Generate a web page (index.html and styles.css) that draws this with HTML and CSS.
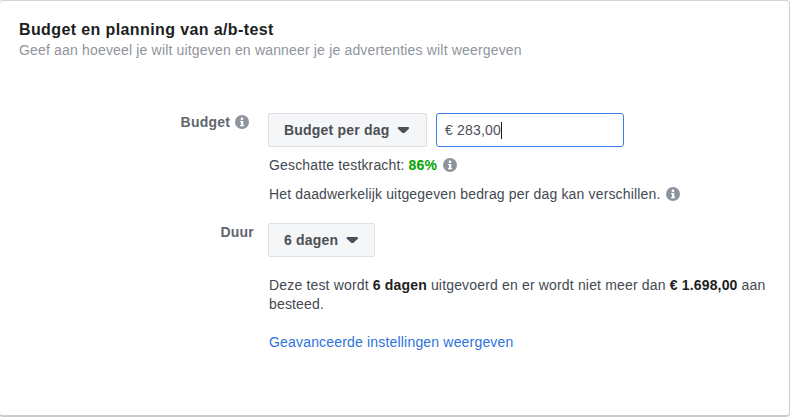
FILE: index.html
```html
<!DOCTYPE html>
<html lang="nl">
<head>
<meta charset="utf-8">
<title>Budget en planning</title>
<link rel="stylesheet" href="styles.css">
</head>
<body>
<svg class="defs" width="0" height="0"><symbol id="info" viewBox="0 0 14 14"><circle cx="7" cy="7" r="7" fill="currentColor"/><rect x="5.9" y="6" width="2.4" height="5.2" fill="#fff"/><rect x="5" y="6" width="1.2" height="1.1" fill="#fff"/><rect x="5" y="10.1" width="4.1" height="1.1" fill="#fff"/><circle cx="7" cy="3.8" r="1.4" fill="#fff"/></symbol></svg>
<section class="card">
  <header class="head">
    <h1 class="title">Budget en planning van a/b-test</h1>
    <p class="sub">Geef aan hoeveel je wilt uitgeven en wanneer je je advertenties wilt weergeven</p>
  </header>
  <div class="form">
    <div class="label with-icon">Budget <svg class="info"><use href="#info"/></svg></div>
    <div class="field">
      <div class="controls">
        <button class="select wide">Budget per dag <span class="caret"></span></button>
        <div class="input"><span>€ 283,00</span><span class="cursor"></span></div>
      </div>
      <p class="line first">Geschatte testkracht: <b class="green">86%</b> <svg class="info"><use href="#info"/></svg></p>
      <p class="line second">Het daadwerkelijk uitgegeven bedrag per dag kan verschillen. <svg class="info"><use href="#info"/></svg></p>
    </div>
    <div class="label">Duur</div>
    <div class="field">
      <div class="controls">
        <button class="select">6 dagen <span class="caret"></span></button>
      </div>
      <p class="para">Deze test wordt <b>6 dagen</b> uitgevoerd en er wordt niet meer dan <b>€ 1.698,00</b> aan besteed.</p>
      <a class="link" href="#">Geavanceerde instellingen weergeven</a>
    </div>
  </div>
</section>
</body>
</html>
```
FILE: styles.css
```css
html, body { margin: 0; padding: 0; background: #fff; }
body { width: 792px; height: 417px; overflow: hidden; font-family: "Liberation Sans", Arial, sans-serif; color: #444950; font-size: 14px; }
.defs { position: absolute; }
.card { box-sizing: border-box; width: 791px; height: 417px; margin-left: -1px; padding: 19px 0 0 19px; background: #fff; border: 1px solid #cdcdcd; border-top-color: #d4d4d4; border-bottom: 2px solid #cdcdcd; border-radius: 4px; }
.title { margin: 0; font-size: 16px; line-height: 20px; font-weight: 700; color: #1c1e21; letter-spacing: 0.39px; }
.sub { margin: 0; font-size: 14px; line-height: 20px; color: #90949c; letter-spacing: 0.17px; }
.form { display: grid; grid-template-columns: 235px 510px; column-gap: 14px; row-gap: 19px; margin-top: 53px; }
.label { display: flex; justify-content: flex-end; align-items: center; gap: 5px; height: 18px; font-size: 14px; font-weight: 700; color: #606770; letter-spacing: 0.2px; white-space: nowrap; }
.with-icon { padding-right: 5px; }
.field { min-width: 0; }
.controls { display: flex; gap: 9px; }
.select { box-sizing: border-box; display: inline-flex; align-items: center; gap: 8px; height: 34px; padding: 0 16px 0 15px; background: #f5f6f7; border: 1px solid #dddfe2; border-radius: 2px; font: 700 14px "Liberation Sans", Arial, sans-serif; color: #4b4f56; letter-spacing: 0.2px; white-space: nowrap; }
.wide { width: 159px; }
.caret { display: inline-block; width: 12px; height: 6px; background: #4b4f56; clip-path: polygon(8% 0, 92% 0, 100% 22%, 58% 100%, 42% 100%, 0 22%); }
.input { box-sizing: border-box; display: flex; align-items: center; width: 188px; height: 34px; padding-left: 8px; border: 1px solid #4080ea; border-radius: 3px; background: #fff; font-size: 14px; color: #4b4f56; letter-spacing: 0.2px; }
.cursor { width: 1px; height: 17px; background: #1c1e21; }
.line { margin: 0; padding-left: 1px; font-size: 14px; line-height: 20px; color: #444950; letter-spacing: 0.155px; white-space: nowrap; }
.first { margin-top: 8px; }
.second { margin-top: 9px; }
.line .info { margin-left: 2px; vertical-align: -2px; }
.green { color: #00a400; }
.info { width: 14px; height: 14px; color: #8d949e; flex: none; }
.para { margin: 19px 0 0; padding-left: 1px; font-size: 14px; line-height: 19px; color: #444950; letter-spacing: 0.165px; }
.para b { color: #1c1e21; }
.link { display: block; margin-top: 18px; padding-left: 1px; font-size: 14px; line-height: 20px; color: #2d72dc; text-decoration: none; letter-spacing: 0.18px; }
```
